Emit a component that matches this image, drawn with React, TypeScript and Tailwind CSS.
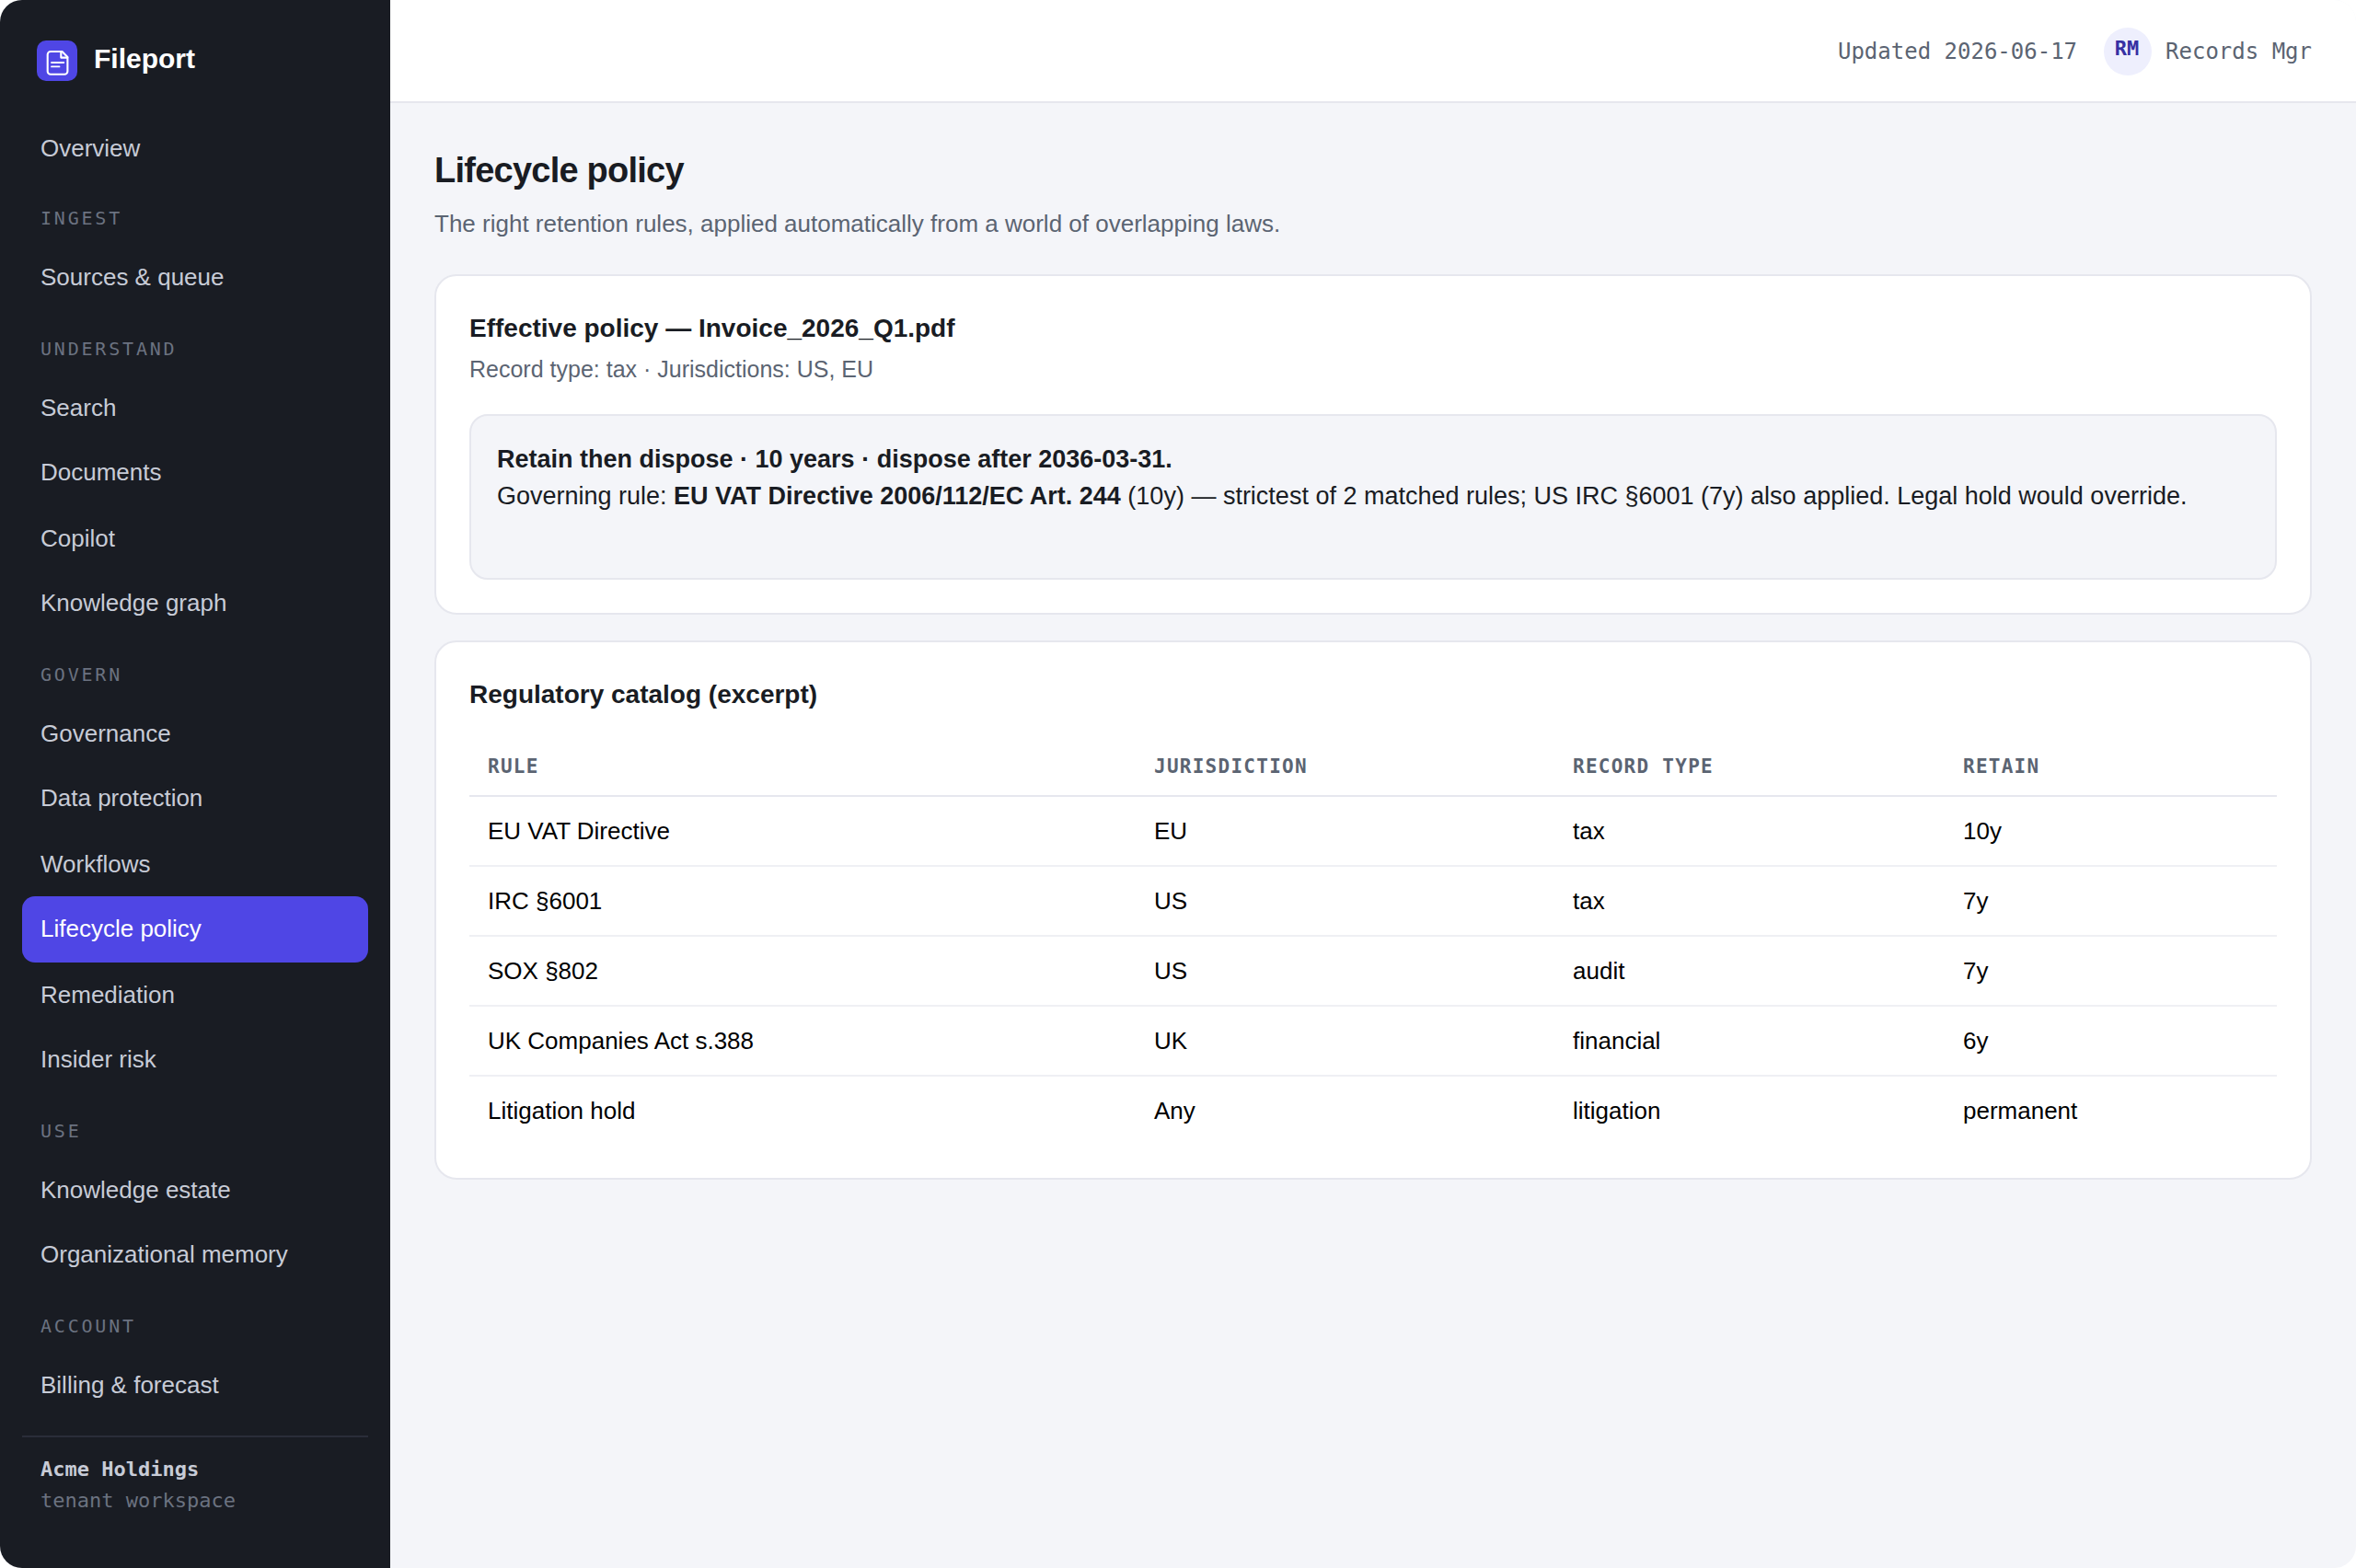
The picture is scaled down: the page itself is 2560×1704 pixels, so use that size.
const navigation = [
  { title: "", items: ["Overview"] },
  { title: "Ingest", items: ["Sources & queue"] },
  {
    title: "Understand",
    items: ["Search", "Documents", "Copilot", "Knowledge graph"],
  },
  {
    title: "Govern",
    items: [
      "Governance",
      "Data protection",
      "Workflows",
      "Lifecycle policy",
      "Remediation",
      "Insider risk",
    ],
  },
  { title: "Use", items: ["Knowledge estate", "Organizational memory"] },
  { title: "Account", items: ["Billing & forecast"] },
];

const allItems = navigation.flatMap((group) => group.items);

const catalog = [
  ["EU VAT Directive", "EU", "tax", "10y"],
  ["IRC §6001", "US", "tax", "7y"],
  ["SOX §802", "US", "audit", "7y"],
  ["UK Companies Act s.388", "UK", "financial", "6y"],
  ["Litigation hold", "Any", "litigation", "permanent"],
];

function Logo() {
  return (
    <svg
      className="size-[44px] rounded-[10px] bg-[#4f46e5]"
      viewBox="0 0 44 44"
      fill="none"
      stroke="white"
      strokeWidth="2.1"
      strokeLinecap="round"
      strokeLinejoin="round"
    >
      <path d="M27.5 12H15a3.3 3.3 0 0 0-3.3 3.3v18.1a3.3 3.3 0 0 0 3.3 3.3h15.1a3.3 3.3 0 0 0 3.3-3.3V17.9z" />
      <path d="M26.3 12v6.6h7" />
      <path d="M16 24h13.3M16 28.4h8.500" strokeWidth="1.8" />
    </svg>
  );
}

function Sidebar() {
  return (
    <aside className="w-[424px] shrink-0 bg-[#191c23] px-6 pt-[44px] flex flex-col">
      <div className="flex px-4 mb-[38px]">
        <Logo />
        <span className="ml-[18px] text-[30px] leading-[40px] font-bold text-white">
          Fileport
        </span>
      </div>

      <nav>
        {navigation.map((group) => (
          <div key={group.title}>
            {group.title && (
              <h2 className="h-[70px] pt-[26px] pl-5 font-['DejaVu_Sans_Mono',monospace] text-[20px] leading-[30px] tracking-[0.14em] uppercase text-[#6b7280]">
                {group.title}
              </h2>
            )}
            {group.items.map((item) => (
              <a
                key={item}
                className={`block pt-4 pl-5 rounded-[14px] text-[26px] leading-[39px] ${
                  allItems.indexOf(item) % 2 ? "h-[72px]" : "h-[70px]"
                } ${
                  item === "Lifecycle policy"
                    ? "bg-[#4f46e5] text-white"
                    : "text-[#c7cbd6]"
                }`}
              >
                {item}
              </a>
            ))}
          </div>
        ))}
      </nav>

      <div className="mt-5 border-t-2 border-[#2a2d39] pt-[18px] pl-5 font-['DejaVu_Sans_Mono',monospace] text-[22px] leading-[34px] text-[#6b7280]">
        <p className="font-bold text-[#c7cbd6]">Acme Holdings</p>
        <p>tenant workspace</p>
      </div>
    </aside>
  );
}

function Topbar() {
  return (
    <header className="h-[112px] shrink-0 bg-white border-b-2 border-[#e6e7ee] px-12 pt-[2px] flex items-center justify-end font-['DejaVu_Sans_Mono',monospace] text-[24px] leading-[36px] text-[#5b6472]">
      <span>Updated 2026-06-17</span>
      <span className="ml-[29px] mr-[15px] pr-[2px] size-[52px] rounded-full bg-[#eeeffd] text-center text-[22px] leading-[45px] font-bold text-[#3730a3]">
        RM
      </span>
      <span>Records Mgr</span>
    </header>
  );
}

export default function App() {
  return (
    <div className="w-[2560px] h-[1704px] bg-[#f4f5f9] rounded-[24px] overflow-hidden flex font-['Liberation_Sans',sans-serif] text-[#191c23]">
      <Sidebar />

      <div className="flex-1 flex flex-col">
        <Topbar />

        <main className="px-12 pt-[50px]">
          <h1 className="text-[38px] leading-[46px] tracking-[-0.02em] font-bold">
            Lifecycle policy
          </h1>
          <p className="mt-4 text-[26px] leading-[39px] text-[#5b6472]">
            The right retention rules, applied automatically from a world of
            overlapping laws.
          </p>

          <section className="mt-[35px] h-[370px] rounded-[24px] border-2 border-[#e6e7ee] bg-white px-9 pt-9">
            <h3 className="text-[28px] leading-[42px] font-bold">
              Effective policy — Invoice_2026_Q1.pdf
            </h3>
            <p className="mt-[5px] text-[25px] leading-[36px] text-[#5b6472]">
              Record type: tax · Jurisdictions: US, EU
            </p>
            <div className="mt-[31px] h-[180px] rounded-[20px] border-2 border-[#e6e7ee] bg-[#f4f5f9] px-7 pt-[27px] text-[27px] leading-[40px]">
              <b>Retain then dispose · 10 years · dispose after 2036-03-31.</b>
              <br />
              Governing rule: <b>EU VAT Directive 2006/112/EC Art. 244</b> (10y)
              — strictest of 2 matched rules; US IRC §6001 (7y) also applied.
              Legal hold would override.
            </div>
          </section>

          <section className="mt-7 h-[586px] rounded-[24px] border-2 border-[#e6e7ee] bg-white px-9 pt-9">
            <h3 className="text-[28px] leading-[42px] font-bold">
              Regulatory catalog (excerpt)
            </h3>
            <table className="mt-7 w-full table-fixed border-separate border-spacing-0 text-left text-[26px] leading-[39px] text-black">
              <thead>
                <tr className="font-['DejaVu_Sans_Mono',monospace] text-[21px] leading-[30px] tracking-[0.06em] uppercase text-[#5b6472]">
                  <th className="w-[724px] h-[62px] px-5 pb-[2px] border-b-2 border-[#e6e7ee]">
                    Rule
                  </th>
                  <th className="w-[455px] px-5 pb-[2px] border-b-2 border-[#e6e7ee]">
                    Jurisdiction
                  </th>
                  <th className="w-[424px] px-5 pb-[2px] border-b-2 border-[#e6e7ee]">
                    Record type
                  </th>
                  <th className="px-5 pb-[2px] border-b-2 border-[#e6e7ee]">
                    Retain
                  </th>
                </tr>
              </thead>
              <tbody>
                {catalog.map((row) => (
                  <tr key={row[0]} className="group">
                    {row.map((cell, idx) => (
                      <td
                        key={idx}
                        className="h-[76px] px-5 border-b-2 border-[#eff0f4] group-last:border-b-0 group-last:h-[74px]"
                      >
                        {cell}
                      </td>
                    ))}
                  </tr>
                ))}
              </tbody>
            </table>
          </section>
        </main>
      </div>
    </div>
  );
}
